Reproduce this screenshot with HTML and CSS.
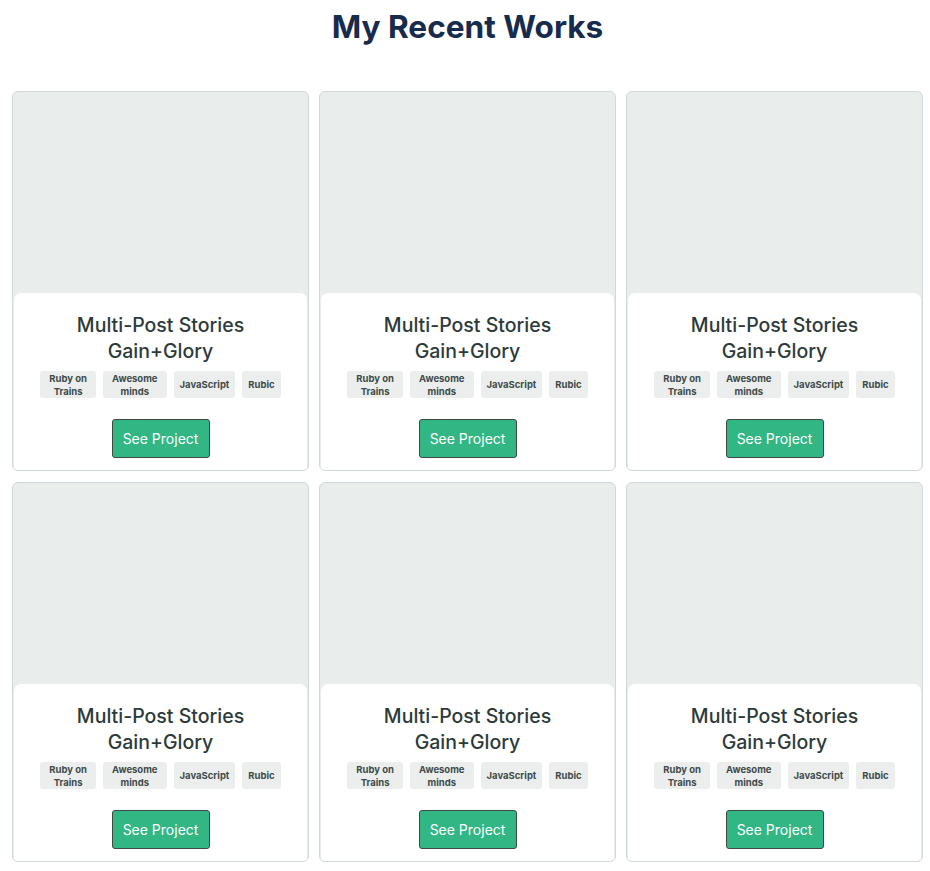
FILE: index.html
```html
<!DOCTYPE html>
<html lang="en">
<head>
<meta charset="utf-8">
<title>My Recent Works</title>
<link rel="stylesheet" href="styles.css">
</head>
<body>
<section class="works">
  <h1 class="works-title">My Recent Works</h1>
  <div class="grid">
    <article class="card">
      <div class="card-img"></div>
      <div class="card-body">
        <h2 class="card-title">Multi-Post Stories<br>Gain+Glory</h2>
        <ul class="tags">
          <li class="tag tag-wrap">Ruby on<br>Trains</li>
          <li class="tag tag-wrap">Awesome<br>minds</li>
          <li class="tag">JavaScript</li>
          <li class="tag">Rubic</li>
        </ul>
        <button class="btn">See Project</button>
      </div>
    </article>
    <article class="card">
      <div class="card-img"></div>
      <div class="card-body">
        <h2 class="card-title">Multi-Post Stories<br>Gain+Glory</h2>
        <ul class="tags">
          <li class="tag tag-wrap">Ruby on<br>Trains</li>
          <li class="tag tag-wrap">Awesome<br>minds</li>
          <li class="tag">JavaScript</li>
          <li class="tag">Rubic</li>
        </ul>
        <button class="btn">See Project</button>
      </div>
    </article>
    <article class="card">
      <div class="card-img"></div>
      <div class="card-body">
        <h2 class="card-title">Multi-Post Stories<br>Gain+Glory</h2>
        <ul class="tags">
          <li class="tag tag-wrap">Ruby on<br>Trains</li>
          <li class="tag tag-wrap">Awesome<br>minds</li>
          <li class="tag">JavaScript</li>
          <li class="tag">Rubic</li>
        </ul>
        <button class="btn">See Project</button>
      </div>
    </article>
    <article class="card">
      <div class="card-img"></div>
      <div class="card-body">
        <h2 class="card-title">Multi-Post Stories<br>Gain+Glory</h2>
        <ul class="tags">
          <li class="tag tag-wrap">Ruby on<br>Trains</li>
          <li class="tag tag-wrap">Awesome<br>minds</li>
          <li class="tag">JavaScript</li>
          <li class="tag">Rubic</li>
        </ul>
        <button class="btn">See Project</button>
      </div>
    </article>
    <article class="card">
      <div class="card-img"></div>
      <div class="card-body">
        <h2 class="card-title">Multi-Post Stories<br>Gain+Glory</h2>
        <ul class="tags">
          <li class="tag tag-wrap">Ruby on<br>Trains</li>
          <li class="tag tag-wrap">Awesome<br>minds</li>
          <li class="tag">JavaScript</li>
          <li class="tag">Rubic</li>
        </ul>
        <button class="btn">See Project</button>
      </div>
    </article>
    <article class="card">
      <div class="card-img"></div>
      <div class="card-body">
        <h2 class="card-title">Multi-Post Stories<br>Gain+Glory</h2>
        <ul class="tags">
          <li class="tag tag-wrap">Ruby on<br>Trains</li>
          <li class="tag tag-wrap">Awesome<br>minds</li>
          <li class="tag">JavaScript</li>
          <li class="tag">Rubic</li>
        </ul>
        <button class="btn">See Project</button>
      </div>
    </article>
  </div>
</section>
</body>
</html>
```

FILE: styles.css
```css
* { box-sizing: border-box; }

body {
  margin: 0;
  background: #ffffff;
  font-family: Inter, "Noto Sans", sans-serif;
}

.works {
  padding: 0 7px 0 12px;
}

.works-title {
  margin: 0;
  padding-top: 8px;
  height: 91px;
  text-align: center;
  font-size: 31.6px;
  line-height: 38px;
  font-weight: 700;
  color: #172b4d;
}

.grid {
  display: grid;
  grid-template-columns: repeat(3, 1fr);
  column-gap: 10px;
  row-gap: 11px;
}

.card {
  display: flex;
  flex-direction: column;
  height: 380px;
  border: 1px solid #d0d9d4;
  border-radius: 6px;
  background: #e9edec;
  padding: 0 1px;
  overflow: hidden;
}

.card-img {
  height: 201px;
  flex: none;
}

.card-body {
  flex: 1;
  background: #ffffff;
  border-radius: 7px 7px 0 0;
  display: flex;
  flex-direction: column;
  align-items: center;
  padding-top: 19px;
}

.card-title {
  margin: 0;
  text-align: center;
  font-size: 19.5px;
  line-height: 26px;
  font-weight: 500;
  color: #2c3b39;
}

.tags {
  list-style: none;
  margin: 7px 0 0;
  padding: 0;
  display: flex;
  gap: 7px;
}

.tag {
  background: #ebeeed;
  border-radius: 3px;
  height: 27px;
  padding: 0 6px;
  display: flex;
  align-items: center;
  text-align: center;
  font-size: 9.5px;
  line-height: 13px;
  font-weight: 700;
  color: #3d4b4a;
}

.tag-wrap {
  padding: 0 9px;
}

.btn {
  margin-top: 21px;
  width: 98px;
  height: 39px;
  background: #31b684;
  border: 1px solid #404844;
  border-radius: 3px;
  color: #ffffff;
  font-family: Inter, "Noto Sans", sans-serif;
  font-size: 14px;
  font-weight: 400;
  padding: 0;
}
```
